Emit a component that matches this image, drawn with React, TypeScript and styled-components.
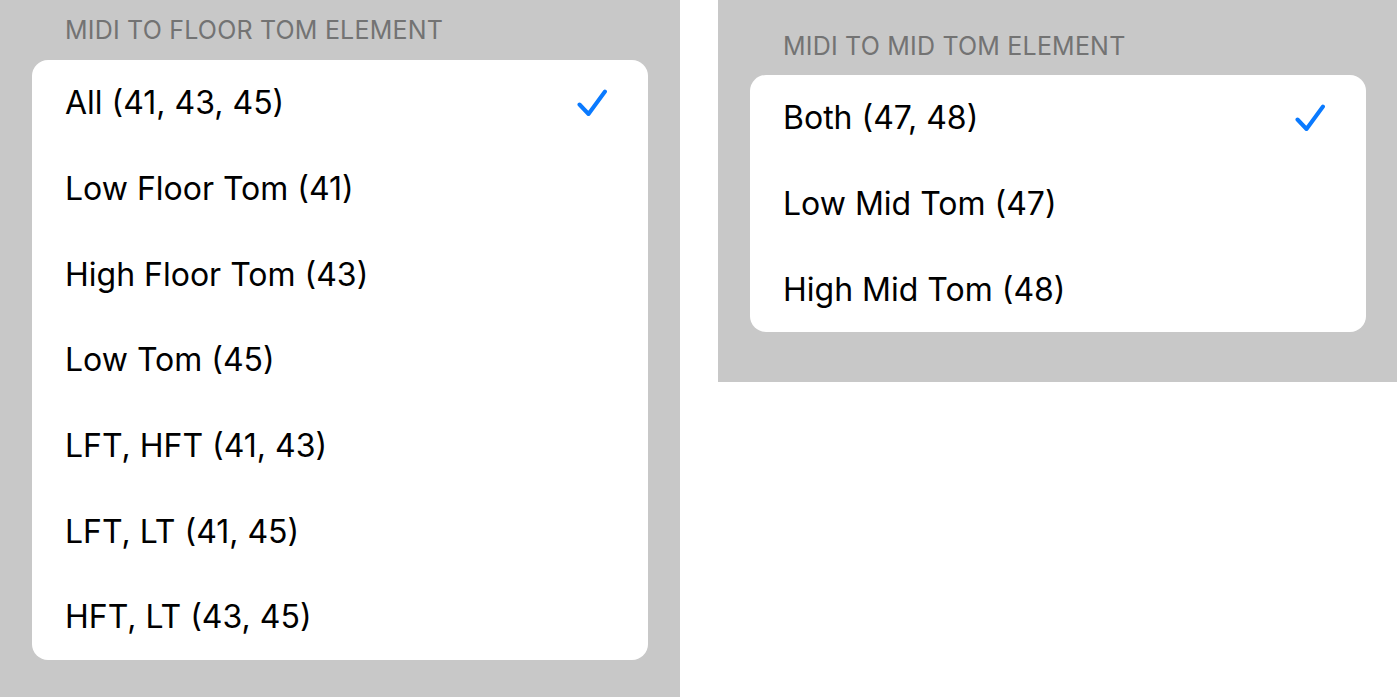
import React from "react";
import styled, { createGlobalStyle } from "styled-components";

const GlobalStyle = createGlobalStyle`
  html, body {
    margin: 0;
    padding: 0;
    background: #ffffff;
  }
  body {
    font-family: Inter, "Noto Sans", "Liberation Sans", sans-serif;
    -webkit-font-smoothing: antialiased;
  }
`;

const Page = styled.div`
  display: flex;
  align-items: flex-start;
  gap: 38px;
  width: 1397px;
  height: 697px;
  overflow: hidden;
`;

const Panel = styled.section<{ $width: number; $height: number; $top: number }>`
  width: ${(p) => p.$width}px;
  height: ${(p) => p.$height}px;
  background: #c8c8c8;
  padding: ${(p) => p.$top}px 32px 0 32px;
  box-sizing: border-box;
  flex-shrink: 0;
`;

const Header = styled.h2<{ $gap: number }>`
  margin: 0 0 ${(p) => p.$gap}px 33px;
  font-size: 25px;
  line-height: 24px;
  font-weight: 400;
  color: #737373;
  letter-spacing: 0.2px;
  text-transform: uppercase;
`;

const Card = styled.ul`
  list-style: none;
  margin: 0;
  padding: 0;
  width: 616px;
  background: #ffffff;
  border-radius: 16px;
  overflow: hidden;
`;

const Row = styled.li`
  display: flex;
  align-items: center;
  justify-content: space-between;
  height: 85.7px;
  padding: 0 40px 0 33px;
  font-size: 32px;
  color: #000000;
`;

const Check = () => (
  <svg width="32" height="28" viewBox="0 0 32 28" fill="none">
    <path
      d="M3.5 15.5 L12.5 25 L29 2.5"
      stroke="#0a7aff"
      strokeWidth="4"
      strokeLinecap="round"
      strokeLinejoin="round"
    />
  </svg>
);

type Option = { label: string; selected?: boolean };

const floorOptions: Option[] = [
  { label: "All (41, 43, 45)", selected: true },
  { label: "Low Floor Tom (41)" },
  { label: "High Floor Tom (43)" },
  { label: "Low Tom (45)" },
  { label: "LFT, HFT (41, 43)" },
  { label: "LFT, LT (41, 45)" },
  { label: "HFT, LT (43, 45)" },
];

const midOptions: Option[] = [
  { label: "Both (47, 48)", selected: true },
  { label: "Low Mid Tom (47)" },
  { label: "High Mid Tom (48)" },
];

const OptionList: React.FC<{ options: Option[] }> = ({ options }) => (
  <Card>
    {options.map((o) => (
      <Row key={o.label}>
        <span>{o.label}</span>
        {o.selected && <Check />}
      </Row>
    ))}
  </Card>
);

export default function App() {
  return (
    <>
      <GlobalStyle />
      <Page>
        <Panel $width={680} $height={697} $top={18}>
          <Header $gap={18}>MIDI to Floor Tom Element</Header>
          <OptionList options={floorOptions} />
        </Panel>
        <Panel $width={679} $height={382} $top={34}>
          <Header $gap={17}>MIDI to Mid Tom Element</Header>
          <OptionList options={midOptions} />
        </Panel>
      </Page>
    </>
  );
}
